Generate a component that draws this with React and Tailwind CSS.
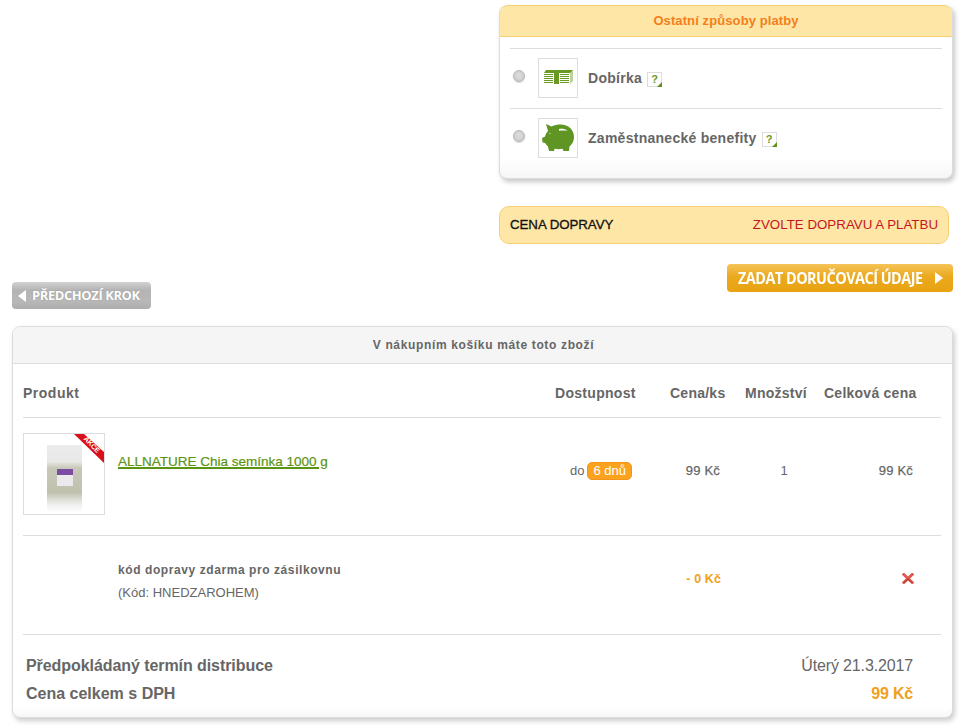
const arial = "font-['Liberation_Sans',Arial,sans-serif]";

function Help() {
  return (
    <span className="relative inline-flex w-[15px] h-[15px] items-center justify-center border border-[#ddd] bg-white text-[11px] font-bold text-[#6a9a24] leading-none tracking-normal">
      ?
      <svg className="absolute -right-px -bottom-px" width="5" height="5" viewBox="0 0 5 5"><polygon points="5,0 5,5 0,5" fill="#5f9319" /></svg>
    </span>
  );
}

function Radio() {
  return <span className="block w-[12px] h-[12px] rounded-full border border-[#b5b5b5] bg-[radial-gradient(circle_at_50%_45%,#dedede,#c6c6c6)] shadow-[0_1px_1px_rgba(0,0,0,0.15)]" />;
}

function Money() {
  const lines = [4, 6, 8, 10, 12];
  return (
    <svg width="30" height="15" viewBox="0 0 30 15">
      <polygon points="3,0 30,0 27,3 1,3" fill="#6a9a24" />
      <g fill="#6a9a24">
        {lines.map((y) => <rect key={`l${y}`} x="1" y={y} width="9" height="1" />)}
        <rect x="11" y="2" width="5" height="12" />
        {lines.map((y) => <rect key={`r${y}`} x="17" y={y} width="9" height="1" />)}
        <polygon points="27,3 30,0 30,11 27,14" opacity=".45" />
      </g>
    </svg>
  );
}

function Piggy() {
  return (
    <svg width="32" height="27" viewBox="0 0 32 27">
      <path fill="#5f9623" d="M4 0 L9.500 2.500 C12.500 1 15.500 0.600 18.500 0.600 C26.500 0.600 32 6 32 13 C32 17.500 30 20.500 27.500 22.500 L27 27 L21.500 27 L20.500 24.800 C18 25.300 15 25.300 12.500 24.800 L12 27 L7 27 L6 22.500 C4.700 21.500 3.800 20.300 3.200 19 L0.600 18.500 L0 14 L2.800 12.800 C3.500 10.500 4.700 8.500 6 7 Z" />
      <path fill="#fff" d="M17 5 C20 4.600 23.500 5 25.500 6.800 C22.500 6.500 20 6.500 17 6.700 Z" />
      <circle cx="8" cy="9.500" r="0.700" fill="#cfe0b8" />
    </svg>
  );
}

function PayRow({ icon, label }) {
  return (
    <div className="flex items-center h-[60px] border-t border-[#ddd]">
      <div className="w-[28px] pl-[3px] -mt-[6px]"><Radio /></div>
      <div className="w-[40px] h-[40px] -mt-[2px] border border-[#ddd] flex items-center justify-center">{icon}</div>
      <div className="ml-[10px] flex items-center gap-[5px] text-[14px] font-bold text-[#666] tracking-[0.27px]">
        {label}
        <span className="mt-[2px] flex"><Help /></span>
      </div>
    </div>
  );
}

function Arrow({ left }) {
  return (
    <svg width="8" height="12" viewBox="0 0 8 12" className="shrink-0">
      <polygon points={left ? "8,0 8,12 0,6" : "0,0 8,6 0,12"} fill="#fff" />
    </svg>
  );
}

function Pouch() {
  return (
    <div className="relative w-[80px] h-[80px] bg-white overflow-hidden">
      <div className="absolute left-[23px] top-[11px] w-[35px] h-[66px] bg-[linear-gradient(#ececec_0,#e8e8e8_25%,#c8c8b8_35%,#c0c1ae_72%,#e2e2dc_84%,#f2f2f2_92%,#fbfbfb_100%)] blur-[0.5px]" />
      <div className="absolute left-[33px] top-[35px] w-[16px] h-[6px] bg-[#7c4ba4]" />
      <div className="absolute left-[33px] top-[41px] w-[16px] h-[11px] bg-[#ece9ec]" />
      <svg className="absolute right-0 top-0" width="30" height="30" viewBox="0 0 30 30">
        <polygon points="0,0 10,0 30,18 30,29" fill="#d9101b" />
      </svg>
      <span className="absolute right-[2px] top-[7px] rotate-45 text-[7px] leading-none font-bold text-white font-['Liberation_Sans',sans-serif]">AKCE</span>
    </div>
  );
}

function XIcon() {
  return (
    <svg width="12" height="11" viewBox="0 0 12 11">
      <path d="M1.800 1.500 L10.200 9.500 M10.200 1.500 L1.800 9.500" stroke="#e0584e" strokeWidth="3" strokeLinecap="square" />
      <path d="M2 9.500 L6 6 L10 9.500" stroke="#a8342c" strokeWidth="1" fill="none" />
    </svg>
  );
}

export default function App() {
  return (
    <div className={`w-[962px] h-[726px] bg-white overflow-hidden pt-[5px] ${arial}`}>
      <div className="ml-[499px] w-[454px] h-[174px] border border-[#dcdcdc] border-t-0 rounded-[8px] bg-white shadow-[2px_3px_5px_rgba(0,0,0,0.22)] overflow-hidden bg-[linear-gradient(to_top,#f6f6f6,#ffffff_20px)]">
        <div className="h-[32px] bg-[#fee6a7] border border-[#f8cf74] border-x-0 rounded-t-[8px] flex items-center justify-center text-[#f47f1a] text-[13px] font-bold tracking-[0.1px]">
          Ostatní způsoby platby
        </div>
        <div className="mx-[10px] mt-[11px]">
          <PayRow icon={<Money />} label="Dobírka" />
          <PayRow icon={<Piggy />} label="Zaměstnanecké benefity" />
        </div>
      </div>

      <div className="ml-[499px] mt-[27px] w-[450px] h-[38px] rounded-[10px] border border-[#f8cf74] bg-[#fee6a7] flex items-center justify-between px-[10px] text-[13.3px]">
        <span className="text-[#111] [-webkit-text-stroke:0.3px_#111] tracking-[-0.05px]">CENA DOPRAVY</span>
        <span className="text-[#c4161c] tracking-[0.02px]">ZVOLTE DOPRAVU A PLATBU</span>
      </div>

      <div className="mt-[20px] ml-[12px] w-[941px] flex justify-between items-start">
        <button className="mt-[18px] w-[139px] h-[27px] rounded-[4px] bg-[linear-gradient(#d2d2d2,#b4b4b4_30%,#b8b8b8_70%,#aeaeae)] flex items-center pl-[6px] gap-[6px] text-white text-[13px] font-['Open_Sans',sans-serif] font-bold tracking-[-0.42px] whitespace-nowrap [text-shadow:0_0_1px_rgba(110,110,110,0.7)]">
          <Arrow left />
          PŘEDCHOZÍ KROK
        </button>
        <button className="w-[226px] h-[28px] rounded-[4px] bg-[linear-gradient(#f5c358,#eba91e_45%,#e8a312)] flex items-center justify-between pl-[11px] pr-[10px] text-white text-[16px] font-['Open_Sans',sans-serif] font-bold tracking-[-0.55px] whitespace-nowrap">
          <span className="inline-block origin-left scale-x-90 w-[186px]">ZADAT DORUČOVACÍ ÚDAJE</span>
          <Arrow />
        </button>
      </div>

      <div className="mt-[17px] ml-[12px] w-[941px] h-[392px] rounded-[8px] border border-[#dcdcdc] bg-white shadow-[2px_3px_5px_rgba(0,0,0,0.2)] overflow-hidden bg-[linear-gradient(to_top,#f7f7f7,#ffffff_10px)] text-[#666]">
        <div className="h-[37px] pl-[2px] bg-[#f5f5f5] border-b border-[#ddd] flex items-center justify-center text-[12px] font-bold tracking-[0.65px]">
          V nákupním košíku máte toto zboží
        </div>

        <div className="ml-[10px] w-[918px]">
          <div className="h-[54px] pt-[6px] flex items-center border-b border-[#ddd] text-[14px] font-bold tracking-[0.25px]">
            <div className="w-[532px] tracking-[0.5px]">Produkt</div>
            <div className="w-[115px] tracking-[0.3px]">Dostupnost</div>
            <div className="w-[75px]">Cena/ks</div>
            <div className="w-[79px]">Množství</div>
            <div>Celková cena</div>
          </div>

          <div className="h-[118px] flex border-b border-[#ddd] pt-[15px] text-[13px]">
            <div className="w-[82px] h-[82px] border border-[#ddd]"><Pouch /></div>
            <a className="ml-[13px] w-[452px] mt-[20px] text-[13.5px] text-[#5c9412] [-webkit-text-stroke:0.2px_#5c9412] underline decoration-[1.5px] leading-[18px] whitespace-nowrap">ALLNATURE Chia semínka 1000 g</a>
            <div className="w-[62px] mt-[29px] flex items-center justify-end gap-[3px] h-[18px] whitespace-nowrap">
              <span>do</span>
              <span className="inline-flex items-center h-[18px] px-[5px] rounded-[5px] border border-[#f3941b] bg-[#fba31f] text-white">6 dnů</span>
            </div>
            <div className="w-[88px] mt-[29px] h-[18px] flex items-center justify-end tracking-[0.2px] [-webkit-text-stroke:0.25px_#666]">99 Kč</div>
            <div className="w-[128px] mt-[29px] h-[18px] flex items-center justify-center">1</div>
            <div className="w-[65px] mt-[29px] h-[18px] flex items-center justify-end tracking-[0.2px] whitespace-nowrap [-webkit-text-stroke:0.25px_#666]">99 Kč</div>
          </div>

          <div className="h-[99px] flex border-b border-[#ddd] text-[13px]">
            <div className="ml-[95px] w-[452px] mt-[26px]">
              <div className="font-bold text-[12px] tracking-[0.58px] leading-[16px]">kód dopravy zdarma pro zásilkovnu</div>
              <div className="mt-[7px] leading-[16px]">(Kód: HNEDZAROHEM)</div>
            </div>
            <div className="w-[151px] mt-[35px] h-[16px] flex items-center justify-end font-bold text-[12.5px] text-[#f0a020] tracking-[0.1px]">- 0 Kč</div>
            <div className="w-[193px] mt-[37px] flex justify-end h-[11px]"><XIcon /></div>
          </div>

          <div className="pl-[3px] pr-[28px] pt-[21px] text-[16px]">
            <div className="flex justify-between h-[20px] items-center">
              <span className="font-bold tracking-[-0.07px]">Předpokládaný termín distribuce</span>
              <span className="tracking-[-0.14px]">Úterý 21.3.2017</span>
            </div>
            <div className="flex justify-between h-[20px] items-center mt-[8px]">
              <span className="font-bold">Cena celkem s DPH</span>
              <span className="font-bold text-[#f0a020] tracking-[-0.2px]">99 Kč</span>
            </div>
          </div>
        </div>
      </div>
    </div>
  );
}
